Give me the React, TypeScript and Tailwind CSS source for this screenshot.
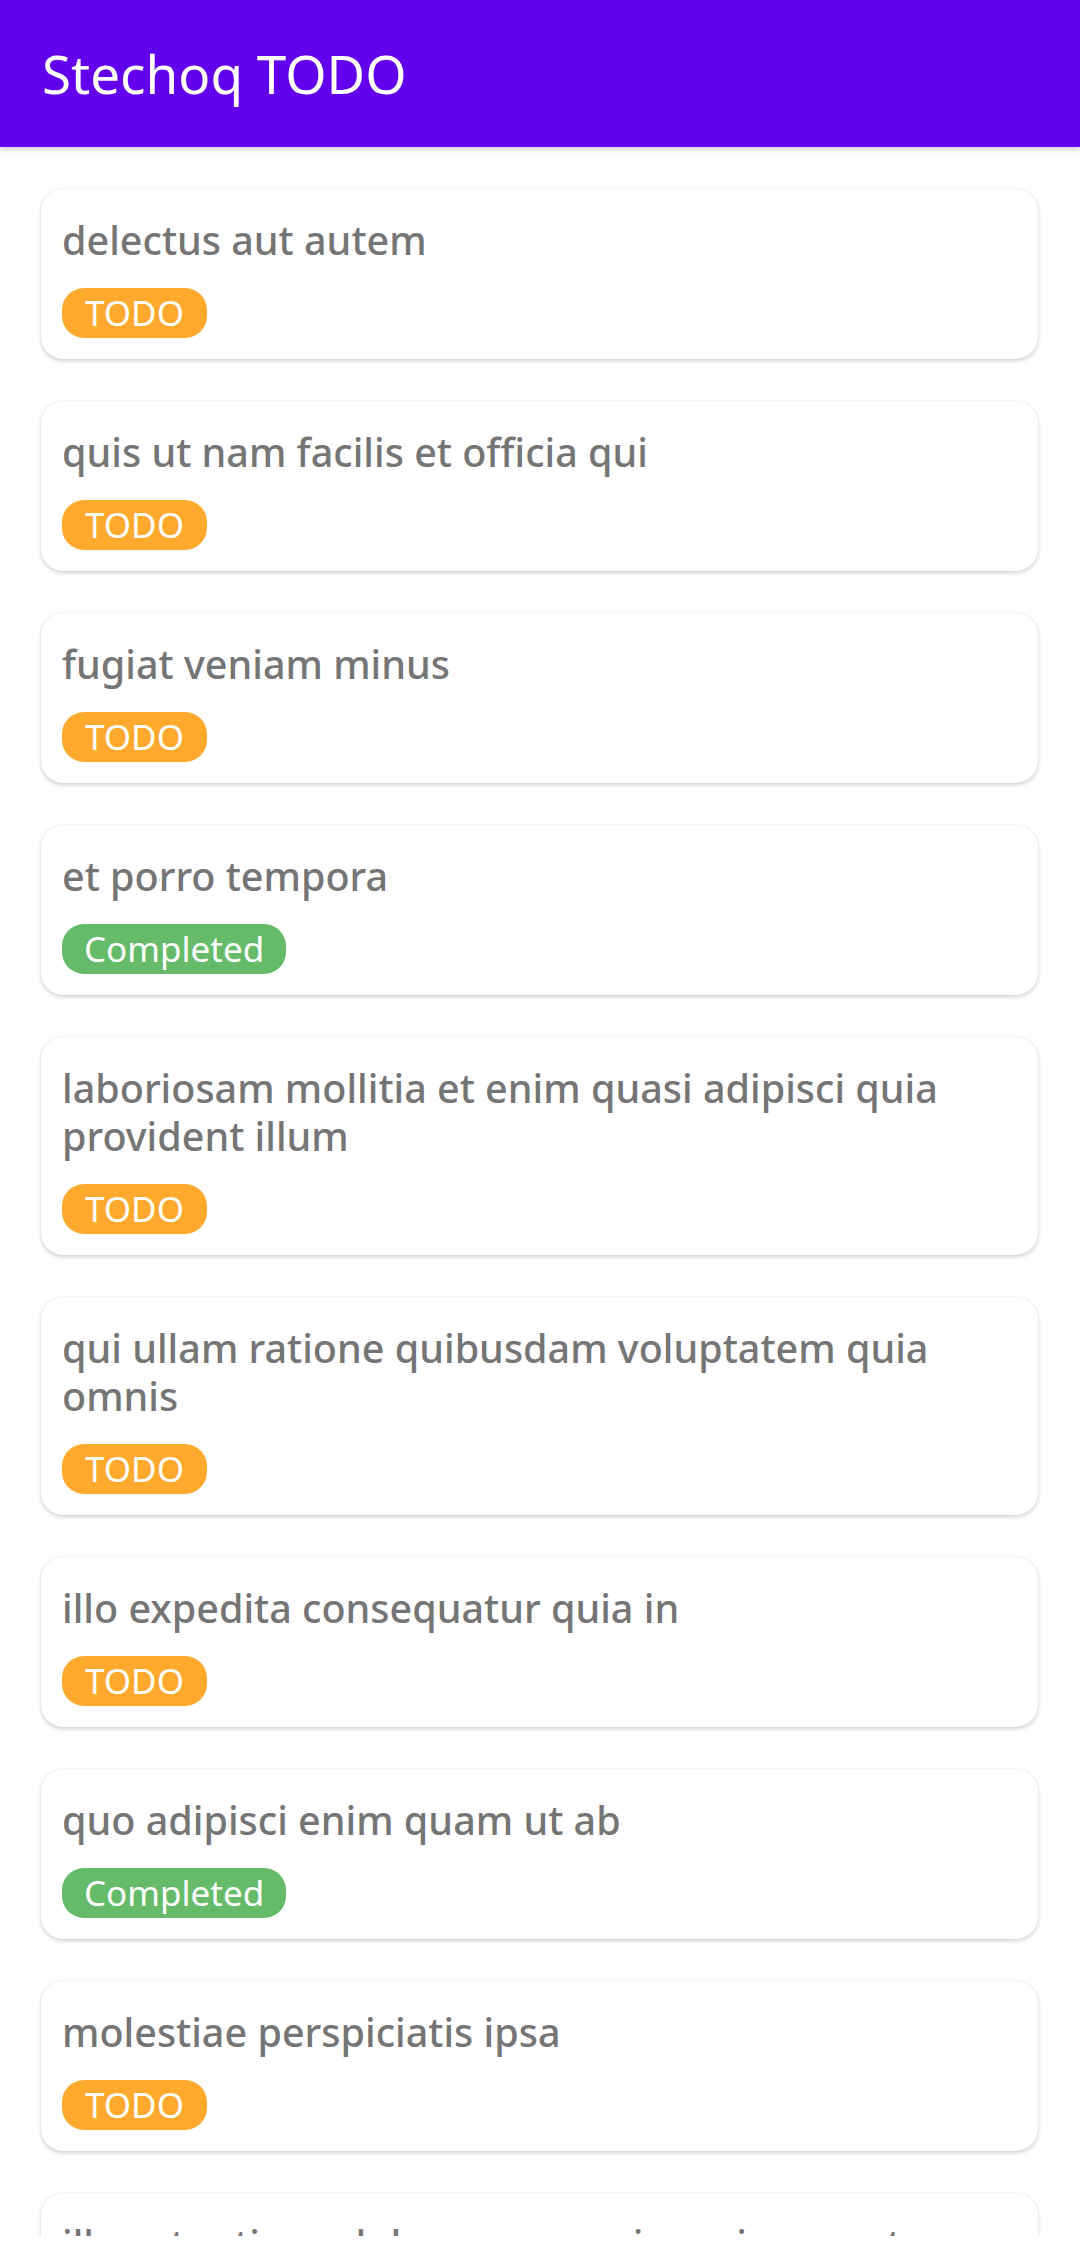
import React from "react";

type Todo = { title: string; completed: boolean };

const todos: Todo[] = [
  { title: "delectus aut autem", completed: false },
  { title: "quis ut nam facilis et officia qui", completed: false },
  { title: "fugiat veniam minus", completed: false },
  { title: "et porro tempora", completed: true },
  { title: "laboriosam mollitia et enim quasi adipisci quia provident illum", completed: false },
  { title: "qui ullam ratione quibusdam voluptatem quia omnis", completed: false },
  { title: "illo expedita consequatur quia in", completed: false },
  { title: "quo adipisci enim quam ut ab", completed: true },
  { title: "molestiae perspiciatis ipsa", completed: false },
  { title: "illo est ratione doloremque quia maiores aut", completed: true },
];

function Card({ todo }: { todo: Todo }) {
  return (
    <div className="rounded-[22px] bg-white px-[21px] pt-[27px] pb-[21px] shadow-[0_2px_4px_rgba(0,0,0,0.18),0_0_1px_rgba(0,0,0,0.12)]">
      <div className="text-[39.5px] leading-[48px] font-medium text-[#757575] pr-[40px]">{todo.title}</div>
      <div className="mt-[24px] flex">
        <span
          className={
            todo.completed
              ? "h-[50px] rounded-[22px] bg-[#66BB6A] px-[22px] text-[35px] leading-[50px] text-white"
              : "h-[50px] rounded-[22px] bg-[#FFA92D] px-[23px] text-[35px] leading-[50px] text-white"
          }
        >
          {todo.completed ? "Completed" : "TODO"}
        </span>
      </div>
    </div>
  );
}

export default function App() {
  return (
    <div className="h-[2257px] w-[1080px] bg-white" style={{ fontFamily: '"Noto Sans", "Open Sans", sans-serif' }}>
      <div className="h-[2236px] overflow-hidden">
        <header className="relative z-10 flex h-[147px] items-center bg-[#6200EE] pl-[42px] shadow-[0_2px_6px_rgba(0,0,0,0.22)]">
          <h1 className="text-[53px] leading-none text-white">Stechoq TODO</h1>
        </header>
        <main className="flex flex-col gap-[42px] pl-[41px] pr-[42px] pt-[42px]">
          {todos.map((t, i) => (
            <Card key={i} todo={t} />
          ))}
        </main>
      </div>
    </div>
  );
}
